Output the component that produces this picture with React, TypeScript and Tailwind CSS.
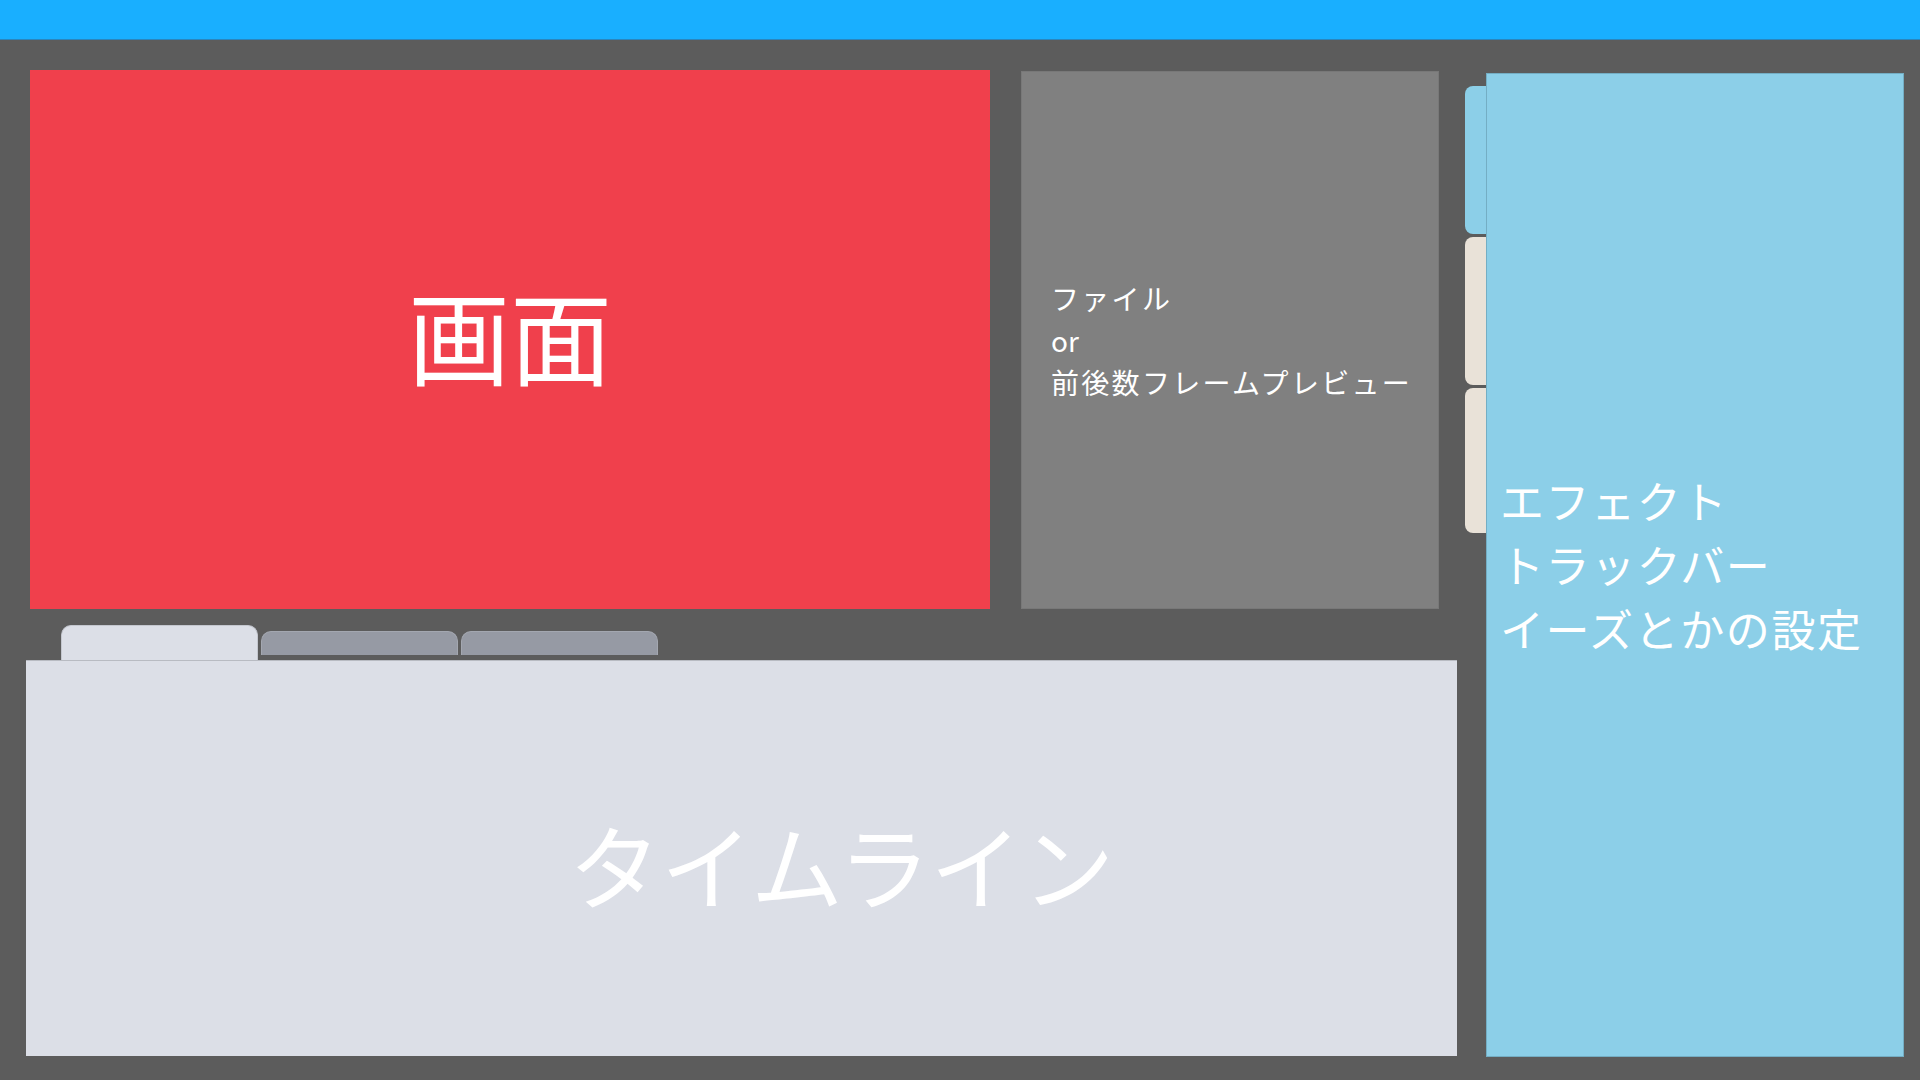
import React from 'react';

const font = "font-['Noto_Sans_CJK_JP','Noto_Sans',sans-serif]";

export default function App() {
    return (
        <div className={`w-[1920px] h-[1080px] bg-[#5c5c5c] flex flex-col overflow-hidden ${font}`}>
            {/* ヘッダー */}
            <div className="h-[40px] bg-[#19afff] border-b border-[#2a86bd] shrink-0" />

            <div className="flex pl-[26px]">
                {/* 左カラム */}
                <div className="w-[1431px] flex flex-col">
                    <div className="flex pt-[30px] pl-[4px] gap-[31px]">
                        <div className="w-[960px] h-[539px] bg-[#f0404c] flex items-center justify-center pb-[12px]">
                            <span className="text-white text-[102px] leading-none">画面</span>
                        </div>
                        <div className="mt-[1px] w-[418px] h-[538px] bg-[#808080] border border-[#787878] flex flex-col justify-center pl-[29px] text-white text-[28px] leading-[42px]">
                            <span className="tracking-[2.3px]">ファイル</span>
                            <span>or</span>
                            <span className="tracking-[2.3px]">前後数フレームプレビュー</span>
                        </div>
                    </div>

                    {/* タブ */}
                    <div className="flex items-start pl-[35px] mt-[16px] h-[35px] gap-[3px]">
                        <div className="w-[197px] h-[35px] bg-[#dcdfe7] rounded-t-[10px] border-x border-t border-[#c4c7cf]" />
                        <div className="mt-[6px] w-[197px] h-[24px] bg-[#969aa4] rounded-t-[10px] border-x border-t border-[#a3a7b0]" />
                        <div className="mt-[6px] w-[197px] h-[24px] bg-[#969aa4] rounded-t-[10px] border-x border-t border-[#a3a7b0]" />
                    </div>

                    <div className="h-[396px] bg-[#dcdfe7] border-t border-[#b8bbc2] flex items-center justify-center pl-[200px] pt-[8px]">
                        <span className="text-white text-[92px] leading-none">タイムライン</span>
                    </div>
                </div>

                {/* サイドタブ */}
                <div className="ml-[8px] w-[21px] pt-[46px] flex flex-col gap-[3px]">
                    <div className="h-[148px] bg-[#8ccfe8] rounded-l-[8px]" />
                    <div className="h-[148px] bg-[#e9e2d8] rounded-l-[8px]" />
                    <div className="h-[145px] bg-[#e9e2d8] rounded-l-[8px]" />
                </div>

                {/* 設定パネル */}
                <div className="mt-[33px] w-[418px] h-[984px] bg-[#8ccfe8] border border-[#74aec4] flex flex-col justify-center pl-[13px] pb-[3px] text-white text-[44px] leading-[64px] tracking-[1.6px]">
                    <span>エフェクト</span>
                    <span>トラックバー</span>
                    <span>イーズとかの設定</span>
                </div>
            </div>
        </div>
    );
}
